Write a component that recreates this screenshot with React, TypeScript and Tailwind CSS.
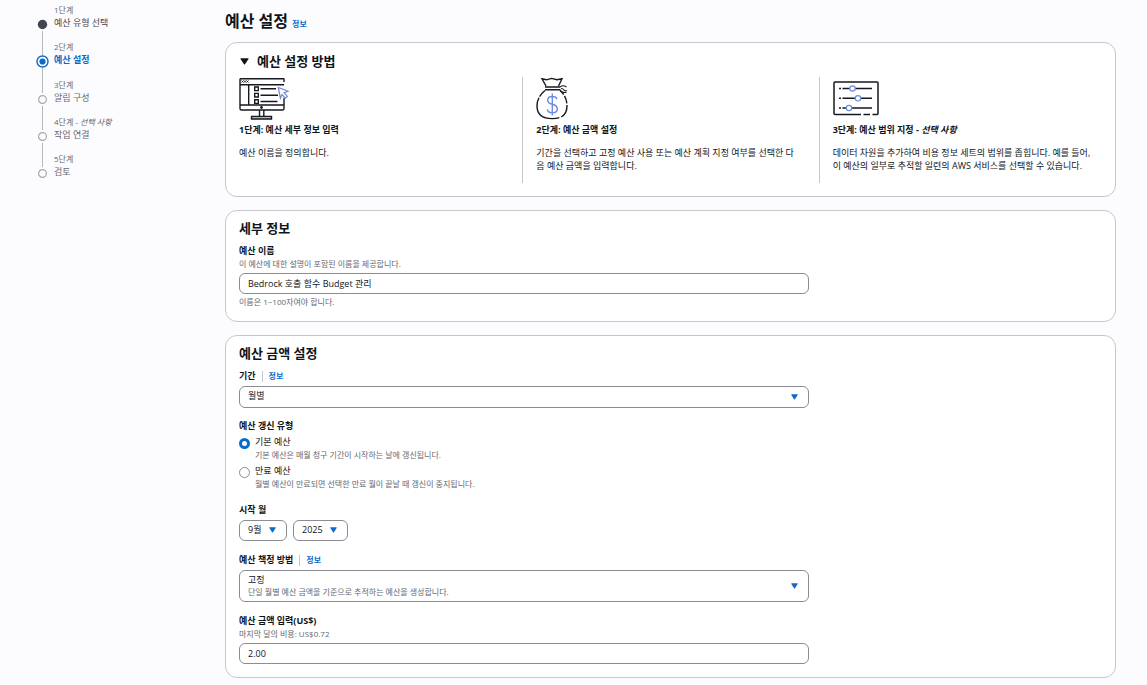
import React, { useState } from 'react';

type StepState = 'done' | 'current' | 'todo';

interface Step {
    label: string;
    title: string;
    state: StepState;
    optional?: boolean;
}

const steps: Step[] = [
    { label: '1단계', title: '예산 유형 선택', state: 'done' },
    { label: '2단계', title: '예산 설정', state: 'current' },
    { label: '3단계', title: '알림 구성', state: 'todo' },
    { label: '4단계', title: '작업 연결', state: 'todo', optional: true },
    { label: '5단계', title: '검토', state: 'todo' },
];

const StepMarker: React.FC<{ state: StepState }> = ({ state }) => (
    <svg className="w-[13px] h-[13px] shrink-0" viewBox="0 0 13 13" fill="none" aria-hidden="true">
        {state === 'done' && <circle cx="6.5" cy="6.5" r="4.7" fill="#424650" />}
        {state === 'current' && (
            <>
                <circle cx="6.5" cy="6.5" r="5.5" stroke="#0a6bc8" strokeWidth="1.4" />
                <circle cx="6.5" cy="6.5" r="3.1" fill="#0a6bc8" />
            </>
        )}
        {state === 'todo' && <circle cx="6.5" cy="6.5" r="3.9" stroke="#a4a8b0" strokeWidth="1.2" />}
    </svg>
);

const StepNav: React.FC = () => (
    <nav aria-label="단계" className="w-[225px] shrink-0 pl-9 pt-1">
        <ol>
            {steps.map((step, i) => (
                <li key={step.label} className={`flex gap-[5px] ${step.state === 'current' ? 'min-h-[38px]' : 'min-h-[37px]'}`}>
                    <div className="flex flex-col items-center">
                        <span className={`w-px h-[14px] ${i > 0 ? 'bg-[#b4b8c0]' : ''}`} />
                        <StepMarker state={step.state} />
                        <span className={`w-px flex-1 ${i < steps.length - 1 ? 'bg-[#b4b8c0]' : ''}`} />
                    </div>
                    <div>
                        <p className="text-[8px] leading-[12px] text-[#656871]">
                            {step.label}
                            {step.optional && <> - <i>선택 사항</i></>}
                        </p>
                        <p className={`text-[9px] leading-[13px] ${step.state === 'current' ? 'font-bold text-[#0a6bc8]' : step.state === 'done' ? 'text-[#424650]' : 'text-[#656871]'}`}>
                            {step.title}
                        </p>
                    </div>
                </li>
            ))}
        </ol>
    </nav>
);

const MonitorIcon: React.FC = () => (
    <svg className="w-[51px] h-[43px]" viewBox="0 0 51 43" fill="none" stroke="#16191f" strokeWidth="1.4" aria-hidden="true">
        <path d="M45 5V2.2Q45 1.7 44.5 1.7H1.7Q1 1.7 1 2.4V31.5Q1 33 2.5 33H43.5Q45 33 45 31.5V21" />
        <path d="M1 7.7H45M9.7 7.7V28M1 28H45" />
        <path d="M2.5 3.5l2 2M4.5 3.5l-2 2M5 3.5l2 2M7 3.5l-2 2M7.5 3.5l2 2M9.5 3.5l-2 2" strokeWidth="0.9" />
        <path d="M15.7 10h3.6v3.6h-3.6zM15.7 16.4h3.6V20h-3.6zM15.7 22.8h3.6v3.6h-3.6z" />
        <path d="M21.5 11.8H37M21.5 18.2H39M21.5 24.5H38.5" />
        <circle cx="22.5" cy="30.5" r="0.7" />
        <path d="M20.5 33v6M24.8 33v6" />
        <path d="M12.5 39.4h20v2.6h-20z" fill="#b4b4b4" />
        <path d="M39.3 10.5l9.8 3.7-4 1.6 3.3 3.6-2.1 1.8-3.3-3.7-1.6 3.7z" stroke="#6c86d9" strokeWidth="1.2" fill="#fff" />
    </svg>
);

const MoneyBagIcon: React.FC = () => (
    <svg className="w-[33px] h-[43px]" viewBox="0 0 33 43" fill="none" stroke="#16191f" strokeWidth="1.4" aria-hidden="true">
        <path d="M10 9L6 1.8 10.5 2.8 15.5 1.4 21 2.8 26 1.8 22.5 9" />
        <path d="M9 10h15M9 12.7h15" />
        <path d="M24 10q3-2.5 6.5 0M25 11.5q2 0 3 1.5t3 .5M24 12.5q1 3.5 6.5 3" strokeWidth="1.1" />
        <path d="M9 13.5Q1 20 1 29Q1 41.6 16.3 41.6Q31 41.6 31 29Q31 19.5 24 13.5" strokeDasharray="8 1.5 38 2 14 1.5" />
        <path d="M20.8 22.2Q20.3 19.5 16.3 19.5Q11.7 19.5 11.7 23.2Q11.7 26.2 16.3 27.3Q21.3 28.5 21.3 32Q21.3 35.8 16.3 35.8Q11.7 35.8 11.4 32.4M16.3 16.5V38.5" stroke="#6c8ce0" />
    </svg>
);

const SlidersIcon: React.FC = () => (
    <svg className="w-[47px] h-[43px]" viewBox="0 0 47 43" fill="none" stroke="#16191f" strokeWidth="1.5" aria-hidden="true">
        <path d="M28 37.5H2Q1 37.5 1 36.5V6Q1 5 2 5H44Q45 5 45 6V36.5Q45 37.5 44 37.5H39.5M30.5 37.5H37" />
        <path d="M6 11.5h2M9.5 11.5H39M6 21.3h2M9.5 21.3H39M6 31h2M9.5 31H39" />
        <g stroke="#6c8ce0" strokeWidth="1.2" fill="#fff">
            <circle cx="19.5" cy="11.5" r="2.7" />
            <circle cx="25" cy="21.3" r="2.7" />
            <circle cx="16" cy="31" r="2.7" />
        </g>
    </svg>
);

const Caret: React.FC<{ className?: string }> = ({ className = '' }) => (
    <svg className={`w-[7px] h-[6px] pointer-events-none ${className}`} viewBox="0 0 7 6" fill="#0a6bc8" aria-hidden="true">
        <path d="M.7.3h5.6q.6 0 .3.6L4 5.3q-.5.6-1 0L.4.9Q.1.3.7.3z" />
    </svg>
);

const InfoLink: React.FC = () => (
    <a href="#info" className="text-[8px] font-bold text-[#0a6bc8] hover:underline">정보</a>
);

const Card: React.FC<{ title: string; children: React.ReactNode }> = ({ title, children }) => (
    <section className="mt-[13px] rounded-xl border border-[#c6c6cd] bg-white px-[13px] pt-[7px] pb-[13px]">
        <h2 className="text-[13px] leading-5 font-bold">{title}</h2>
        <div className="mt-[6px] max-w-[570px]">{children}</div>
    </section>
);

const labelClass = 'block text-[9px] leading-[14px] font-bold';
const hintClass = 'text-[8px] leading-[12px] text-[#656871]';
const controlClass = 'block w-full appearance-none rounded-md border border-[#8c8c94] bg-white px-2 text-[9px] text-[#0f141a]';

interface GuideProps {
    icon: React.ReactNode;
    title: string;
    optional?: boolean;
    children: React.ReactNode;
}

const GuideStep: React.FC<GuideProps> = ({ icon, title, optional, children }) => (
    <div className="border-l border-[#c6c6cd] first:border-l-0 pl-[13px] pr-5 pb-[11px]">
        {icon}
        <h3 className="mt-[3px] text-[9px] leading-[14px] font-bold">
            {title}
            {optional && <> - <i>선택 사항</i></>}
        </h3>
        <p className="mt-[9px] text-[9px] leading-[13px]">{children}</p>
    </div>
);

const renewalTypes = [
    { id: 'recurring', title: '기본 예산', description: '기본 예산은 매월 청구 기간이 시작하는 날에 갱신됩니다.' },
    { id: 'expiring', title: '만료 예산', description: '월별 예산이 만료되면 선택한 만료 월이 끝날 때 갱신이 중지됩니다.' },
];

const App: React.FC = () => {
    const [open, setOpen] = useState(true);
    const [name, setName] = useState('Bedrock 호출 함수 Budget 관리');
    const [renewal, setRenewal] = useState('recurring');
    const [amount, setAmount] = useState('2.00');

    return (
        <div className="flex min-h-screen bg-[#fcfcfe] text-[#0f141a] font-['Open_Sans','Noto_Sans_CJK_KR',sans-serif]">
            <StepNav />

            <main className="flex-1 pt-[11px] pr-[31px] pb-2">
                <div className="flex items-baseline gap-1">
                    <h1 className="text-[16px] leading-5 font-bold">예산 설정</h1>
                    <InfoLink />
                </div>

                <section className="mt-[11px] rounded-xl border border-[#c6c6cd] bg-white pt-2 pb-[13px]">
                    <h2 className="px-[14px] text-[13px] leading-5 font-bold">
                        <button type="button" aria-expanded={open} onClick={() => setOpen(!open)} className="flex items-center gap-2">
                            <svg className={`w-[9px] h-[7px] ${open ? '' : '-rotate-90'}`} viewBox="0 0 9 7" fill="#0f141a" aria-hidden="true">
                                <path d="M.8.3h7.4q.6 0 .3.6L5 6.2q-.5.6-1 0L.5.9Q.2.3.8.3z" />
                            </svg>
                            예산 설정 방법
                        </button>
                    </h2>
                    {open && (
                        <div className="mt-[6px] grid grid-cols-3">
                            <GuideStep icon={<MonitorIcon />} title="1단계: 예산 세부 정보 입력">
                                예산 이름을 정의합니다.
                            </GuideStep>
                            <GuideStep icon={<MoneyBagIcon />} title="2단계: 예산 금액 설정">
                                기간을 선택하고 고정 예산 사용 또는 예산 계획 지정 여부를 선택한 다음 예산 금액을 입력합니다.
                            </GuideStep>
                            <GuideStep icon={<SlidersIcon />} title="3단계: 예산 범위 지정" optional>
                                데이터 차원을 추가하여 비용 정보 세트의 범위를 좁힙니다. 예를 들어, 이 예산의 일부로 추적할 일련의 AWS 서비스를 선택할 수 있습니다.
                            </GuideStep>
                        </div>
                    )}
                </section>

                <Card title="세부 정보">
                    <label htmlFor="budget-name" className={labelClass}>예산 이름</label>
                    <p className={hintClass}>이 예산에 대한 설명이 포함된 이름을 제공합니다.</p>
                    <input id="budget-name" value={name} onChange={e => setName(e.target.value)} className={`${controlClass} mt-[3px] h-[21px]`} />
                    <p className={`${hintClass} mt-[2px]`}>이름은 1~100자여야 합니다.</p>
                </Card>

                <Card title="예산 금액 설정">
                    <div className="flex items-center">
                        <label htmlFor="period" className={labelClass}>기간</label>
                        <span className="mx-[6px] h-[11px] w-px bg-[#c6c6cd]" />
                        <InfoLink />
                    </div>
                    <div className="relative mt-[3px]">
                        <select id="period" className={`${controlClass} h-[22px] pb-[2px]`}>
                            <option>월별</option>
                        </select>
                        <Caret className="absolute right-[11px] top-2" />
                    </div>

                    <fieldset className="mt-[11px]">
                        <legend className={labelClass}>예산 갱신 유형</legend>
                        <div className="mt-[2px] flex flex-col gap-[3px]">
                            {renewalTypes.map(type => (
                                <label key={type.id} className="flex gap-[5px]">
                                    <input
                                        type="radio"
                                        name="renewal"
                                        checked={renewal === type.id}
                                        onChange={() => setRenewal(type.id)}
                                        className="mt-[3px] size-[11px] shrink-0 appearance-none rounded-full border border-[#8c8c94] bg-white checked:border-[3px] checked:border-[#0a6bc8]"
                                    />
                                    <span>
                                        <span className="block text-[9px] leading-[14px]">{type.title}</span>
                                        <span className={`block ${hintClass}`}>{type.description}</span>
                                    </span>
                                </label>
                            ))}
                        </div>
                    </fieldset>

                    <fieldset className="mt-[13px]">
                        <legend className={labelClass}>시작 월</legend>
                        <div className="mt-[3px] flex gap-[6px]">
                            <div className="relative w-12">
                                <select aria-label="월" className={`${controlClass} h-[21px] pb-[2px]`}>
                                    <option>9월</option>
                                </select>
                                <Caret className="absolute right-[11px] top-[7px]" />
                            </div>
                            <div className="relative w-[55px]">
                                <select aria-label="연도" className={`${controlClass} h-[21px] pb-[2px]`}>
                                    <option>2025</option>
                                </select>
                                <Caret className="absolute right-[11px] top-[7px]" />
                            </div>
                        </div>
                    </fieldset>

                    <div className="mt-3 flex items-center">
                        <label htmlFor="method" className={labelClass}>예산 책정 방법</label>
                        <span className="mx-[6px] h-[11px] w-px bg-[#c6c6cd]" />
                        <InfoLink />
                    </div>
                    <div className="relative mt-[3px]">
                        <select id="method" aria-describedby="method-hint" className={`${controlClass} h-8 pb-3`}>
                            <option>고정</option>
                        </select>
                        <p id="method-hint" className={`${hintClass} pointer-events-none absolute left-[9px] bottom-1`}>
                            단일 월별 예산 금액을 기준으로 추적하는 예산을 생성합니다.
                        </p>
                        <Caret className="absolute right-[11px] top-[13px]" />
                    </div>

                    <label htmlFor="amount" className={`${labelClass} mt-3`}>예산 금액 입력(US$)</label>
                    <p className={hintClass}>마지막 달의 비용: US$0.72</p>
                    <input id="amount" inputMode="decimal" value={amount} onChange={e => setAmount(e.target.value)} className={`${controlClass} mt-[3px] h-[21px]`} />
                </Card>
            </main>
        </div>
    );
};

export default App;
